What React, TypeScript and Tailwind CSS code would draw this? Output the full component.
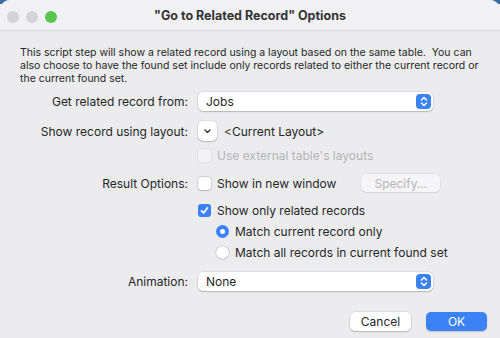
import React from "react";

// macOS-style sheet for the "Go to Related Record" script step options.

function Stepper() {
  return (
    <span className="flex h-[15px] w-[15px] items-center justify-center rounded-[4px] bg-[#3b82f6]">
      <svg width="8" height="11" viewBox="0 0 8 11" fill="none" stroke="white" strokeWidth="1.5" strokeLinecap="round" strokeLinejoin="round">
        <path d="M1.5 4 L4 1.5 L6.5 4" />
        <path d="M1.5 7 L4 9.5 L6.5 7" />
      </svg>
    </span>
  );
}

function Popup({ value }: { value: string }) {
  return (
    <div className="flex h-[19px] w-[235px] items-center justify-between rounded-[5px] bg-white pl-[8px] pr-[2px] shadow-[0_0_0_0.5px_rgba(0,0,0,0.12),0_1px_1.5px_rgba(0,0,0,0.18)]">
      <span>{value}</span>
      <Stepper />
    </div>
  );
}

function Checkbox({ checked, disabled }: { checked?: boolean; disabled?: boolean }) {
  if (checked) {
    return (
      <span className="flex h-[13px] w-[13px] shrink-0 items-center justify-center rounded-[3px] bg-[#3b82f6]">
        <svg width="9" height="9" viewBox="0 0 9 9" fill="none" stroke="white" strokeWidth="1.7" strokeLinecap="round" strokeLinejoin="round">
          <path d="M1.5 4.8 L3.6 7 L7.5 1.8" />
        </svg>
      </span>
    );
  }
  return (
    <span
      className={
        disabled
          ? "h-[13px] w-[13px] shrink-0 rounded-[3px] bg-[#f3f3f5] shadow-[0_0_0_0.5px_rgba(0,0,0,0.08)]"
          : "h-[13px] w-[13px] shrink-0 rounded-[3px] bg-white shadow-[0_0_0_0.5px_rgba(0,0,0,0.2),0_0.5px_1px_rgba(0,0,0,0.15)]"
      }
    />
  );
}

function Radio({ on }: { on?: boolean }) {
  return on ? (
    <span className="flex h-[13px] w-[13px] shrink-0 items-center justify-center rounded-full bg-[#3b82f6]">
      <span className="h-[5px] w-[5px] rounded-full bg-white" />
    </span>
  ) : (
    <span className="h-[13px] w-[13px] shrink-0 rounded-full bg-white shadow-[0_0_0_0.5px_rgba(0,0,0,0.2),0_0.5px_1px_rgba(0,0,0,0.15)]" />
  );
}

function Row({ label, children, className }: { label?: string; children: React.ReactNode; className?: string }) {
  return (
    <div className={"flex items-center " + (className ?? "")}>
      <div className="w-[198px] shrink-0 pr-[10px] text-right">{label}</div>
      <div className="flex flex-1 items-center">{children}</div>
    </div>
  );
}

export default function App() {
  return (
    <div className="relative h-[338px] w-[500px] overflow-hidden bg-[#ececef] font-['Inter','Liberation_Sans',sans-serif] text-[12px] leading-[15px] text-[#262626]">
      <div className="absolute left-0 top-0 h-[4px] w-full bg-[#3c6fa8]" />
      <div className="relative flex h-full flex-col rounded-t-[10px] bg-[#ececef]">
        {/* title bar */}
        <div className="relative flex h-[31px] shrink-0 items-center justify-center rounded-t-[10px] border-b border-[#d9d9dc] bg-[#f1f1f4]">
          <div className="absolute left-[7px] top-[11px] flex gap-[7px]">
            <span className="h-[12px] w-[12px] rounded-full bg-[#d4d4d6]" />
            <span className="h-[12px] w-[12px] rounded-full bg-[#d4d4d6]" />
            <span className="h-[12px] w-[12px] rounded-full bg-[#5ac54f]" />
          </div>
          <span className="pt-[1px] text-[12.5px] font-bold text-[#333335]">"Go to Related Record" Options</span>
        </div>

        <div className="flex flex-1 flex-col pt-[15px]">
          <p className="px-[20px] text-[10.5px] leading-[13px]">
            This script step will show a related record using a layout based on the same table.&nbsp; You can also choose to have the found set include only records related to either the current record or the current found set.
          </p>

          <Row label="Get related record from:" className="mt-[7px]">
            <Popup value="Jobs" />
          </Row>

          <Row label="Show record using layout:" className="mt-[10px]">
            <span className="flex h-[20px] w-[19px] items-center justify-center rounded-[5px] bg-white shadow-[0_0_0_0.5px_rgba(0,0,0,0.12),0_1px_1.5px_rgba(0,0,0,0.18)]">
              <svg width="7" height="5" viewBox="0 0 7 5" fill="none" stroke="#333" strokeWidth="1.4" strokeLinecap="round" strokeLinejoin="round">
                <path d="M1 1 L3.5 3.5 L6 1" />
              </svg>
            </span>
            <span className="ml-[7px]">&lt;Current Layout&gt;</span>
          </Row>

          <Row className="mt-[7px]">
            <Checkbox disabled />
            <span className="ml-[6px] text-[#b4b4b7]">Use external table's layouts</span>
          </Row>

          <Row label="Result Options:" className="mt-[11px]">
            <Checkbox />
            <span className="ml-[6px]">Show in new window</span>
            <span className="ml-[25px] flex h-[18px] w-[79px] items-center justify-center rounded-[5px] bg-[#f5f5f7] text-[#b4b4b7] shadow-[0_0_0_0.5px_rgba(0,0,0,0.06),0_0.5px_1px_rgba(0,0,0,0.08)]">
              Specify...
            </span>
          </Row>

          <Row className="mt-[11px]">
            <Checkbox checked />
            <span className="ml-[6px]">Show only related records</span>
          </Row>

          <Row className="mt-[6px]">
            <span className="ml-[18px]" />
            <Radio on />
            <span className="ml-[6px]">Match current record only</span>
          </Row>

          <Row className="mt-[6px]">
            <span className="ml-[18px]" />
            <Radio />
            <span className="ml-[6px]">Match all records in current found set</span>
          </Row>

          <Row label="Animation:" className="mt-[12px]">
            <Popup value="None" />
          </Row>

          <div className="mt-[21px] flex justify-end gap-[15px] pr-[13px]">
            <button className="h-[19px] w-[61px] rounded-[5px] bg-white text-[12px] shadow-[0_0_0_0.5px_rgba(0,0,0,0.12),0_1px_1.5px_rgba(0,0,0,0.18)]">
              Cancel
            </button>
            <button className="h-[19px] w-[61px] rounded-[5px] bg-[#3b82f6] text-[12px] text-white shadow-[0_1px_1.5px_rgba(0,0,0,0.18)]">
              OK
            </button>
          </div>
        </div>
      </div>
    </div>
  );
}
